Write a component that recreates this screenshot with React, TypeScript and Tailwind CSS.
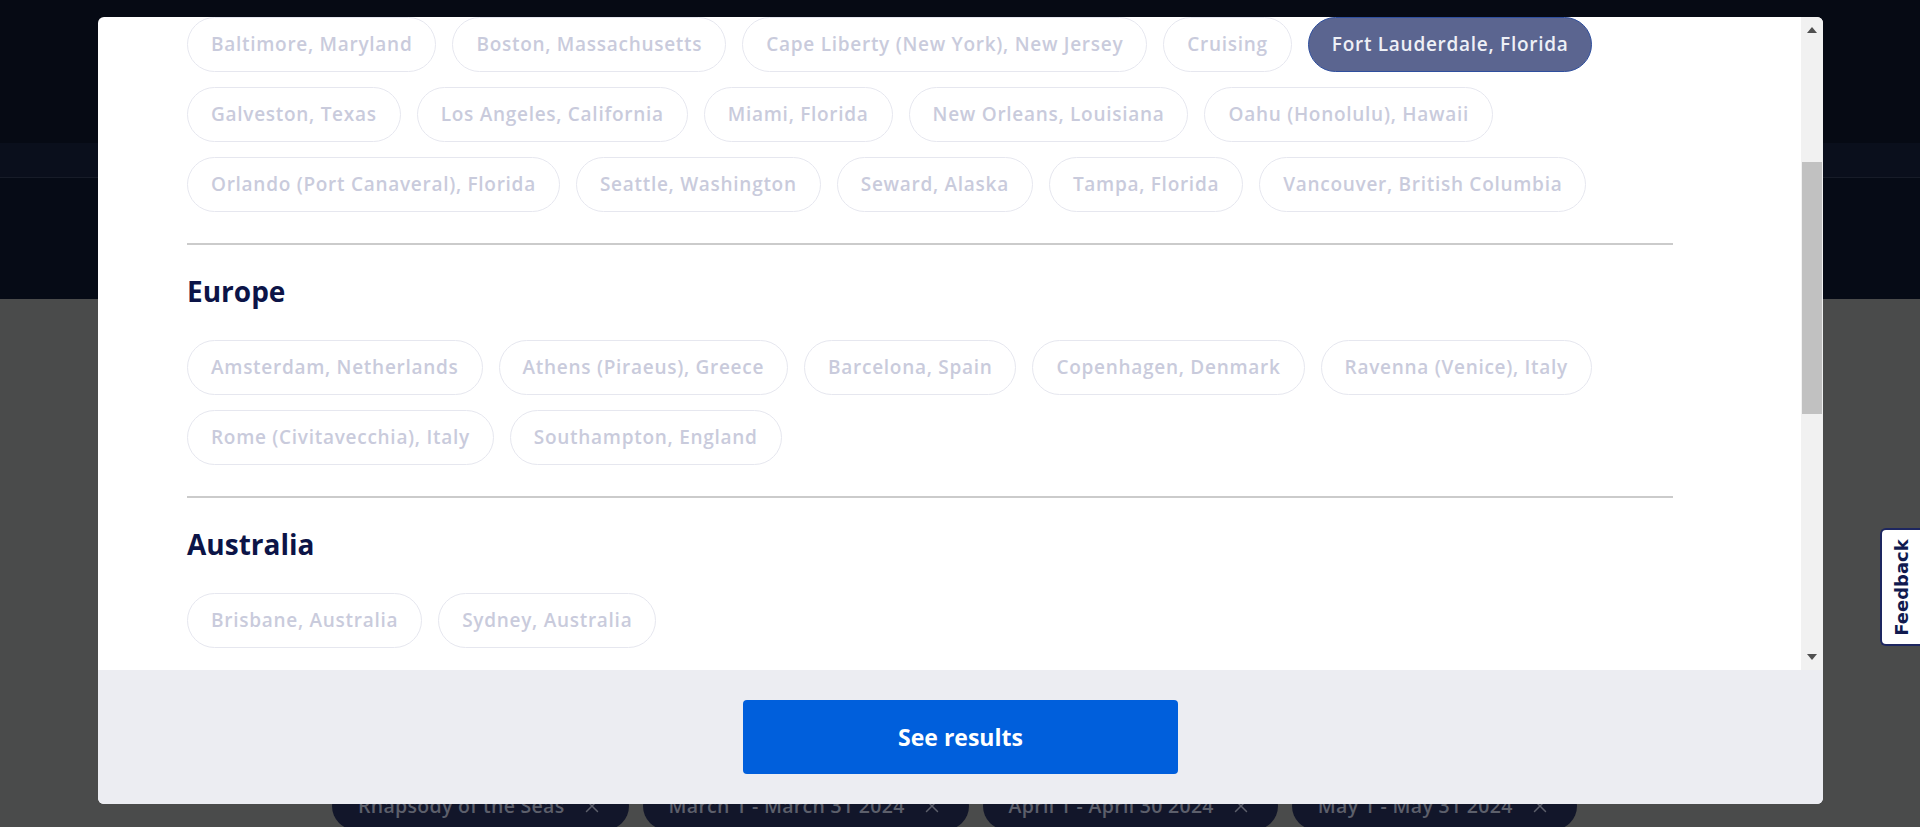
import React from 'react'
import { X } from 'lucide-react'

const usRows = [
  ['Baltimore, Maryland', 'Boston, Massachusetts', 'Cape Liberty (New York), New Jersey', 'Cruising', 'Fort Lauderdale, Florida'],
  ['Galveston, Texas', 'Los Angeles, California', 'Miami, Florida', 'New Orleans, Louisiana', 'Oahu (Honolulu), Hawaii'],
  ['Orlando (Port Canaveral), Florida', 'Seattle, Washington', 'Seward, Alaska', 'Tampa, Florida', 'Vancouver, British Columbia'],
]

const europeRows = [
  ['Amsterdam, Netherlands', 'Athens (Piraeus), Greece', 'Barcelona, Spain', 'Copenhagen, Denmark', 'Ravenna (Venice), Italy'],
  ['Rome (Civitavecchia), Italy', 'Southampton, England'],
]

const australiaRows = [['Brisbane, Australia', 'Sydney, Australia']]

const selected = 'Fort Lauderdale, Florida'

const filters = ['Rhapsody of the Seas', 'March 1 - March 31 2024', 'April 1 - April 30 2024', 'May 1 - May 31 2024']

const Pill = ({ label }: { label: string }) => {
  const active = label === selected
  return (
    <button
      className={
        active
          ? 'h-[55px] px-[23px] rounded-full border border-[#2f4f9e] bg-[#5b6590] text-[#eef0f6] text-[19px] tracking-[0.72px] font-semibold whitespace-nowrap'
          : 'h-[55px] px-[23px] rounded-full border border-[#e6e7ef] bg-white text-[#c9cbdc] text-[19px] tracking-[0.72px] font-semibold whitespace-nowrap'
      }
    >
      {label}
    </button>
  )
}

const PillRows = ({ rows }: { rows: string[][] }) => (
  <div className="flex flex-col gap-[15px]">
    {rows.map((row, i) => (
      <div key={i} className="flex gap-4">
        {row.map((p) => (
          <Pill key={p} label={p} />
        ))}
      </div>
    ))}
  </div>
)

const Section = ({ title, rows }: { title: string; rows: string[][] }) => (
  <div>
    <div className="h-[2px] bg-[#cbcbcb] mt-[31px]" />
    <h2 className="mt-[29px] text-[28px] leading-[34px] font-bold text-[#0c1447]">{title}</h2>
    <div className="mt-[32px]">
      <PillRows rows={rows} />
    </div>
  </div>
)

export default function App() {
  return (
    <div className="relative h-screen overflow-hidden bg-[#4a4b4b]" style={{ fontFamily: '"Open Sans", Lato, sans-serif' }}>
      {/* page behind the overlay */}
      <div className="h-[143px] bg-[#060a14]" />
      <div className="h-[35px] bg-[#0a0f1c] border-b border-[#171c28]" />
      <div className="h-[121px] bg-[#060b16]" />
      <div className="pt-[483px] pl-[332px] flex gap-[14px]">
        {filters.map((f) => (
          <div key={f} className="h-[48px] shrink-0 rounded-full bg-[#12162a] pl-[26px] pr-[26px] flex items-center gap-[16px] text-[#5c5f6b] text-[19.5px] tracking-[0.3px] font-semibold">
            <span className="whitespace-nowrap">{f}</span>
            <X size={22} strokeWidth={1.6} />
          </div>
        ))}
      </div>

      {/* modal */}
      <div className="absolute left-[98px] top-[17px] w-[1725px] h-[787px] bg-white rounded-[6px] overflow-hidden flex flex-col">
        <div className="h-[653px] flex">
          <div className="flex-1 overflow-hidden pl-[89px] pr-[128px]">
            <PillRows rows={usRows} />
            <Section title="Europe" rows={europeRows} />
            <Section title="Australia" rows={australiaRows} />
          </div>
          {/* scrollbar */}
          <div className="w-[22px] bg-[#f1f1f1] flex flex-col items-center">
            <div className="h-[26px] flex items-center justify-center">
              <div className="w-0 h-0 border-l-[5px] border-r-[5px] border-b-[6px] border-l-transparent border-r-transparent border-b-[#505050]" />
            </div>
            <div className="h-[119px]" />
            <div className="w-[20px] h-[252px] bg-[#c1c1c1]" />
            <div className="flex-1" />
            <div className="h-[26px] flex items-center justify-center">
              <div className="w-0 h-0 border-l-[5px] border-r-[5px] border-t-[6px] border-l-transparent border-r-transparent border-t-[#505050]" />
            </div>
          </div>
        </div>
        <div className="flex-1 bg-[#ecedf2] flex items-center justify-center">
          <button className="w-[435px] h-[74px] rounded-[4px] bg-[#005fdc] text-white text-[23px] font-bold">
            See results
          </button>
        </div>
      </div>

      {/* feedback tab */}
      <div className="absolute right-0 top-[528px] w-[40px] h-[118px] bg-white border-2 border-r-0 border-[#1d2660] rounded-l-[6px] flex items-center justify-center">
        <span
          className="-rotate-90 whitespace-nowrap text-[18px] font-bold text-[#101a4f]"
          style={{ fontFamily: '"DejaVu Sans", sans-serif' }}
        >
          Feedback
        </span>
      </div>
    </div>
  )
}
